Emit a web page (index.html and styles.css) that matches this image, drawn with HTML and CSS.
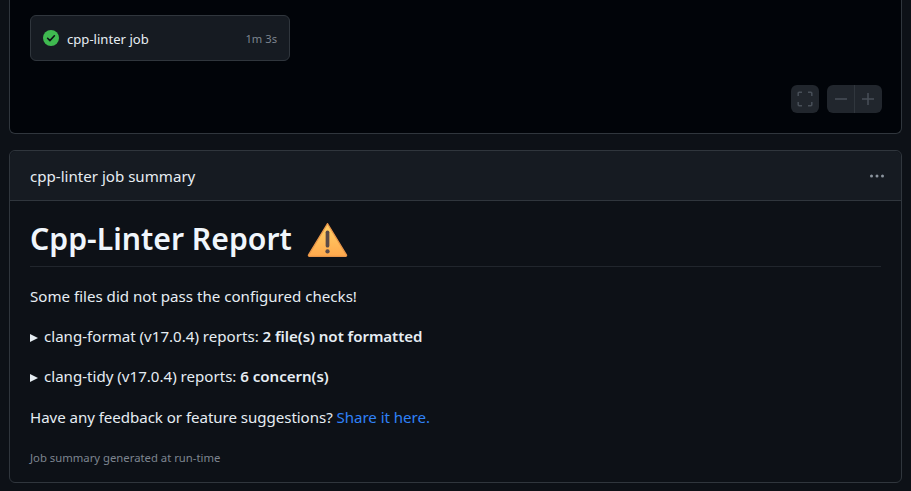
FILE: index.html
```html
<!DOCTYPE html>
<html lang="en">
<head>
<meta charset="utf-8">
<title>cpp-linter job summary</title>
<link rel="stylesheet" href="styles.css">
</head>
<body>
<main class="page">
  <section class="graph">
    <div class="job">
      <svg class="check" viewBox="0 0 16 16" width="16" height="16"><circle cx="8" cy="8" r="8" fill="#3fb950"/><path d="M4.6 8.3l2.3 2.3 4.5-4.8" fill="none" stroke="#0d1117" stroke-width="1.6" stroke-linecap="round" stroke-linejoin="round"/></svg>
      <span class="job-name">cpp-linter job</span>
      <span class="job-time">1m 3s</span>
    </div>
    <div class="controls">
      <div class="ctrl ctrl-single">
        <svg viewBox="0 0 16 16" width="16" height="16" fill="none" stroke="#484f58" stroke-width="1.5"><path d="M1.2 5V2.2a1 1 0 0 1 1-1H5M11 1.2h2.8a1 1 0 0 1 1 1V5M14.8 11v2.8a1 1 0 0 1-1 1H11M5 14.8H2.2a1 1 0 0 1-1-1V11"/></svg>
      </div>
      <div class="ctrl-group">
        <div class="ctrl ctrl-left">
          <svg viewBox="0 0 16 16" width="16" height="16" fill="none" stroke="#484f58" stroke-width="1.5"><path d="M2 8h12"/></svg>
        </div>
        <div class="ctrl ctrl-right">
          <svg viewBox="0 0 16 16" width="16" height="16" fill="none" stroke="#484f58" stroke-width="1.5"><path d="M2 8h12M8 2v12"/></svg>
        </div>
      </div>
    </div>
  </section>

  <section class="summary">
    <header class="summary-head">
      <span class="summary-title">cpp-linter job summary</span>
      <svg class="kebab" viewBox="0 0 16 16" width="16" height="16" fill="#8b949e"><circle cx="2.5" cy="8" r="1.5"/><circle cx="8" cy="8" r="1.5"/><circle cx="13.5" cy="8" r="1.5"/></svg>
    </header>
    <div class="summary-body">
      <h1 class="report-title">Cpp-Linter Report
        <svg class="warn" viewBox="0 0 40 36" width="41" height="37"><defs><linearGradient id="w" x1="0" y1="0" x2="0" y2="1"><stop offset="0" stop-color="#ffd268"/><stop offset="1" stop-color="#ffa94d"/></linearGradient></defs><path d="M20 2.5 38.5 33a1 1 0 0 1-.9 1.5H2.4a1 1 0 0 1-.9-1.5z" fill="url(#w)" stroke="#e8964a" stroke-width="1.2" stroke-linejoin="round"/><path d="M20 11v13" stroke="#5a4a48" stroke-width="3.6" stroke-linecap="round"/><circle cx="20" cy="29.6" r="2.1" fill="#5a4a48"/></svg>
      </h1>
      <p class="line">Some files did not pass the configured checks!</p>
      <p class="line"><span class="tri"></span>clang-format (v17.0.4) reports: <strong>2 file(s) not formatted</strong></p>
      <p class="line"><span class="tri"></span>clang-tidy (v17.0.4) reports: <strong>6 concern(s)</strong></p>
      <p class="line line-tight">Have any feedback or feature suggestions? <a class="link" href="#">Share it here.</a></p>
      <p class="foot">Job summary generated at run-time</p>
    </div>
  </section>
</main>
</body>
</html>
```
FILE: styles.css
```css
* { box-sizing: border-box; }
html, body { margin: 0; height: 100%; overflow: hidden; }
body {
  background: #0d1117;
  color: #e6edf3;
  font-family: "Noto Sans", "Open Sans", sans-serif;
}
.page {
  width: 893px;
  margin-left: 9px;
  display: flex;
  flex-direction: column;
  gap: 16px;
}
.graph {
  height: 134px;
  background: #010409;
  border: 1px solid #30363d;
  border-top: 0;
  border-radius: 0 0 6px 6px;
  padding: 15px 19px 0 20px;
  display: flex;
  flex-direction: column;
}
.job {
  width: 260px;
  height: 46px;
  background: #161b22;
  border: 1px solid #30363d;
  border-radius: 6px;
  padding: 0 12px;
  display: flex;
  align-items: center;
}
.job-name { margin-left: 8px; font-size: 13.1px; line-height: 18px; padding-top: 1px; color: #e6edf3; }
.job-time { margin-left: auto; font-size: 11.2px; color: #7d8590; }
.controls {
  margin-top: 24px;
  display: flex;
  justify-content: flex-end;
  gap: 8px;
}
.ctrl {
  width: 28px;
  height: 28px;
  display: flex;
  align-items: center;
  justify-content: center;
}
.ctrl-left { width: 27px; padding-left: 1px; }
.ctrl-single, .ctrl-group { background: #21262d; border-radius: 6px; }
.ctrl-group { display: flex; }
.ctrl-right { border-left: 1px solid #30363d; padding-right: 1px; }
.summary {
  height: 333px;
  background: #0d1117;
  border: 1px solid #30363d;
  border-radius: 6px;
}
.summary-head {
  height: 50px;
  background: #161b22;
  border-bottom: 1px solid #30363d;
  border-radius: 6px 6px 0 0;
  padding: 0 16px 0 20px;
  display: flex;
  align-items: center;
  justify-content: space-between;
}
.summary-title { font-size: 15.1px; }
.summary-body { padding: 17px 20px 0; }
.report-title {
  margin: 0;
  height: 49px;
  border-bottom: 1px solid #21262d;
  font-size: 30.2px;
  font-weight: 600;
  line-height: 42px;
  color: #f0f6fc;
  display: flex;
  align-items: flex-start;
  gap: 15px;
}
.warn { margin-top: 3px; }
.line {
  margin: 0;
  height: 40.2px;
  font-size: 15.1px;
  line-height: 20px;
}
.line-tight { letter-spacing: -0.05px; }
.report-title + .line { margin-top: 19px; }
.tri {
  display: inline-block;
  margin-right: 6px;
  width: 0;
  height: 0;
  border-left: 8px solid #e6edf3;
  border-top: 4px solid transparent;
  border-bottom: 4px solid transparent;
}
strong { font-weight: 600; letter-spacing: -0.05px; }
.link { color: #2f81f7; text-decoration: none; }
.foot { margin: 3px 0 0; font-size: 11.3px; line-height: 16px; color: #7d8590; }
```
